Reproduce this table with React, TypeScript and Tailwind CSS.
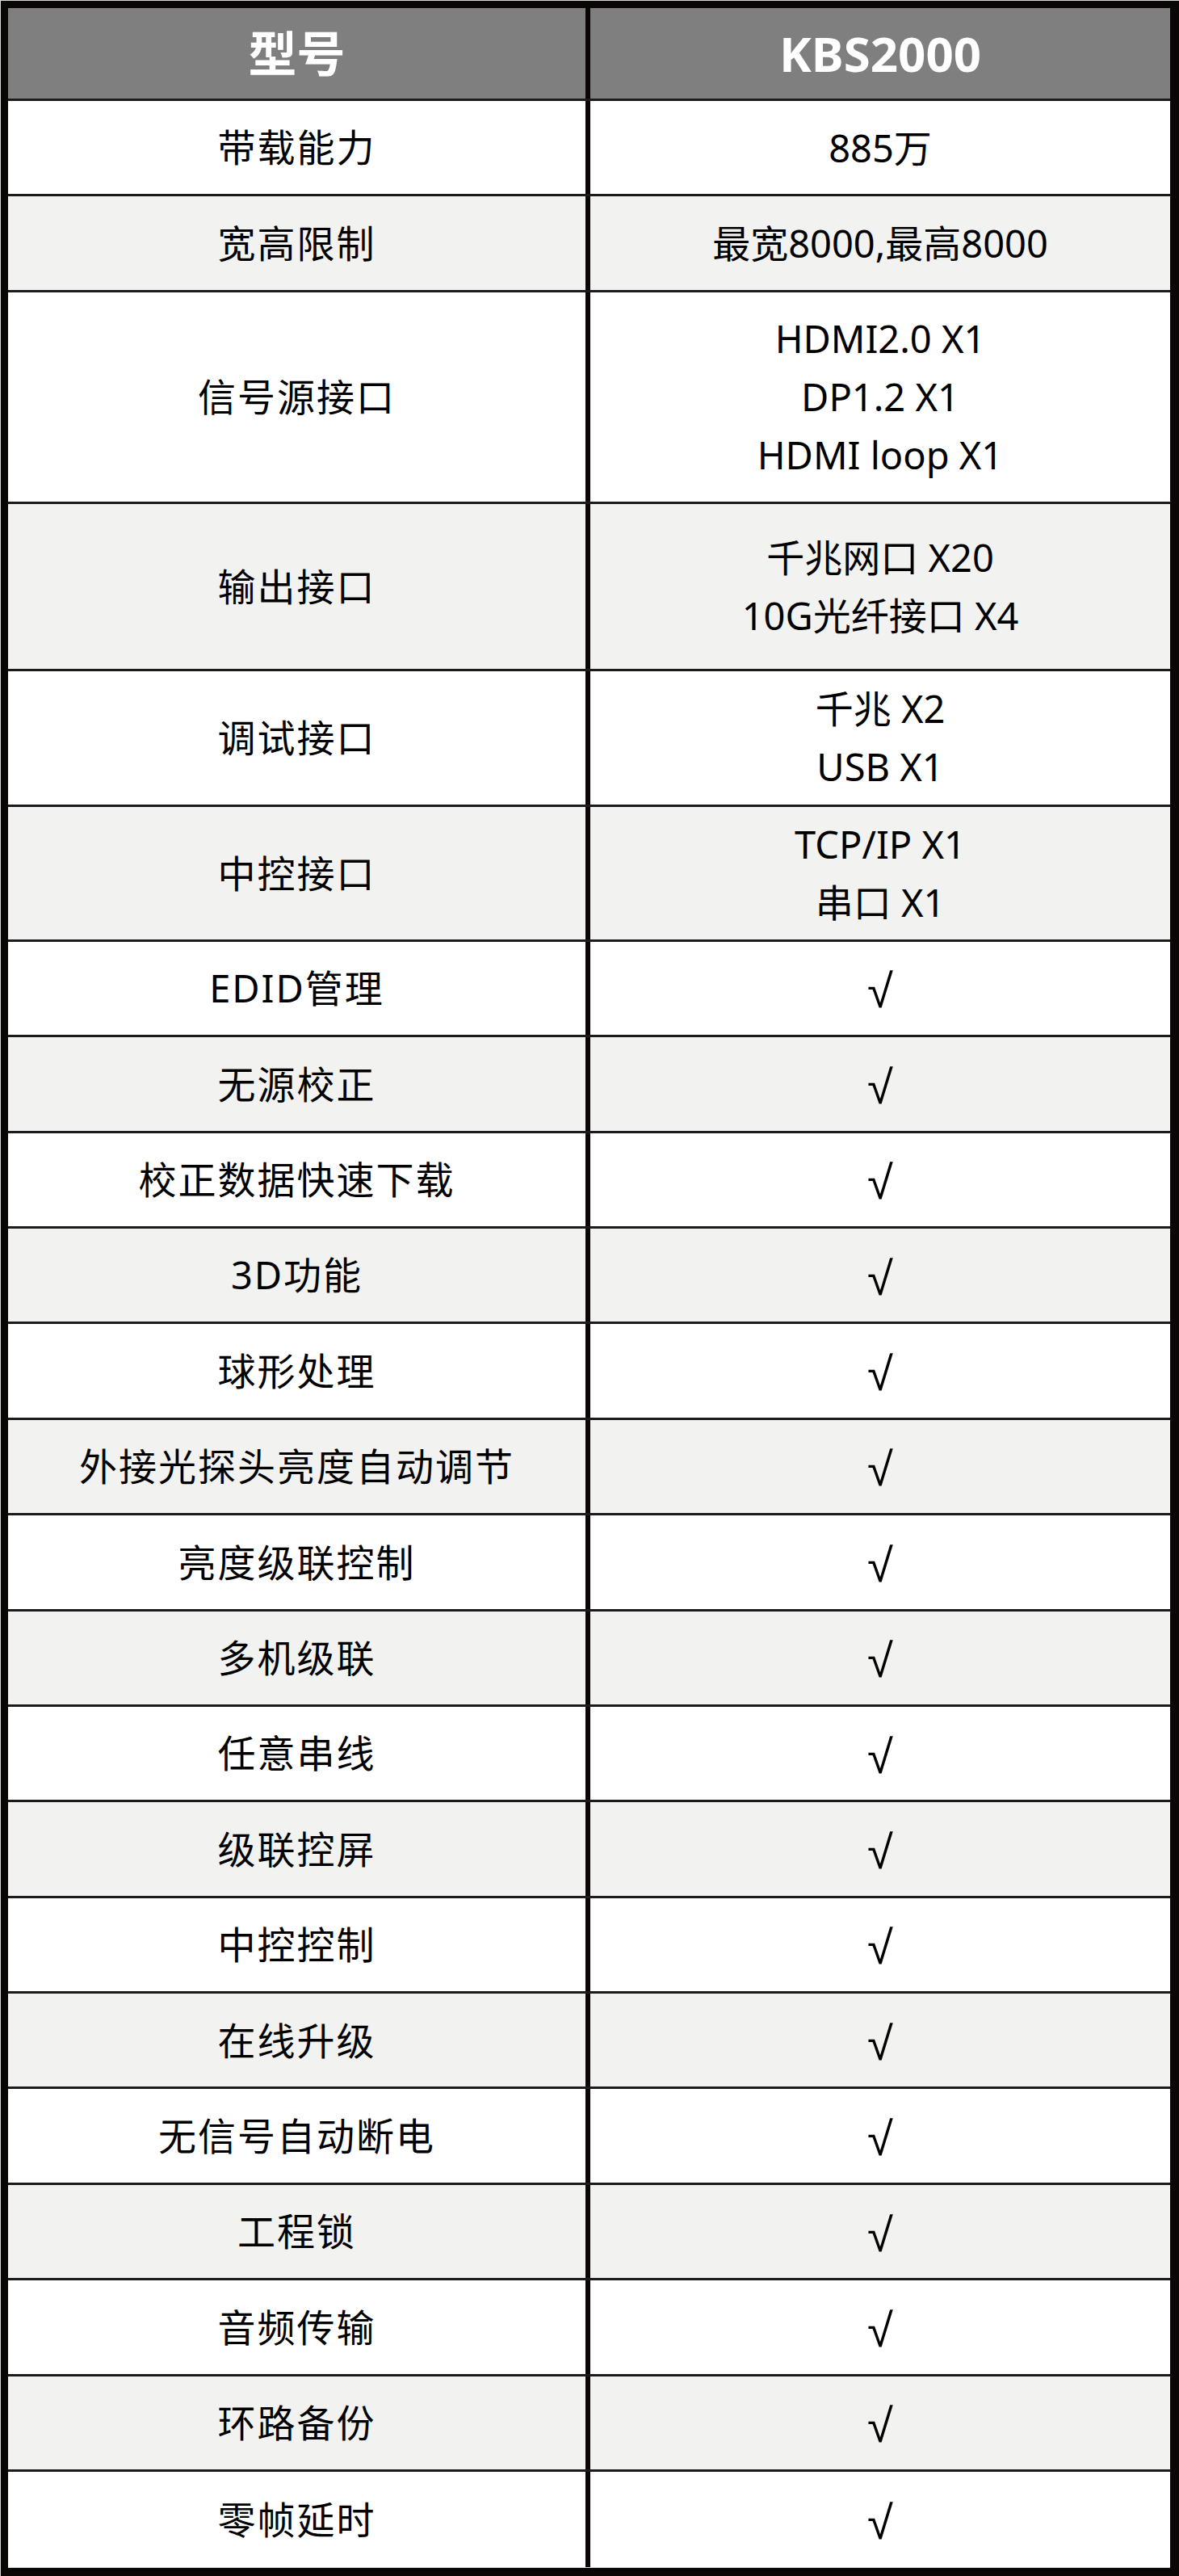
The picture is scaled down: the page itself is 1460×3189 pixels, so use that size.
const rows: { name: string; value: string[]; h?: string }[] = [
  { name: "带载能力", value: ["885万"] },
  { name: "宽高限制", value: ["最宽8000,最高8000"] },
  { name: "信号源接口", value: ["HDMI2.0 X1", "DP1.2 X1", "HDMI loop X1"], h: "h-[262px]" },
  { name: "输出接口", value: ["千兆网口 X20", "10G光纤接口 X4"], h: "h-[207px]" },
  { name: "调试接口", value: ["千兆 X2", "USB X1"], h: "h-[168px]" },
  { name: "中控接口", value: ["TCP/IP X1", "串口 X1"], h: "h-[167px]" },
  { name: "EDID管理", value: ["√"] },
  { name: "无源校正", value: ["√"] },
  { name: "校正数据快速下载", value: ["√"] },
  { name: "3D功能", value: ["√"] },
  { name: "球形处理", value: ["√"] },
  { name: "外接光探头亮度自动调节", value: ["√"] },
  { name: "亮度级联控制", value: ["√"] },
  { name: "多机级联", value: ["√"] },
  { name: "任意串线", value: ["√"] },
  { name: "级联控屏", value: ["√"] },
  { name: "中控控制", value: ["√"] },
  { name: "在线升级", value: ["√"] },
  { name: "无信号自动断电", value: ["√"] },
  { name: "工程锁", value: ["√"] },
  { name: "音频传输", value: ["√"] },
  { name: "环路备份", value: ["√"] },
  { name: "零帧延时", value: ["√"] },
];

const font = "font-['Noto_Sans','Noto_Sans_CJK_SC',sans-serif]";

export default function App() {
  return (
    <div className={`w-[1460px] h-[3189px] bg-[#d9d9d9] pl-px pt-px ${font}`}>
      <div className="flex h-full flex-col border-t-[9px] border-l-[9px] border-r-[11px] border-b-[10px] border-[#0a0606]">
        <div className="flex h-[115px] shrink-0 border-b-[3px] border-[#1c1a1a] bg-[#7f7f7f] text-[60px] font-bold text-white">
          <div className="flex w-[715px] items-center justify-center">型号</div>
          <div className="flex flex-1 items-center justify-center border-l-[6px] border-[#0a0606]">KBS2000</div>
        </div>
        {rows.map((r, i) => {
          const last = i === rows.length - 1;
          return (
            <div
              key={r.name}
              className={`flex shrink-0 text-[47px] text-black ${r.h ?? "h-[118.4px]"} ${
                last ? "" : "border-b-[3px] border-[#1c1a1a]"
              } ${i % 2 ? "bg-[#f2f2f0]" : "bg-white"}`}
            >
              <div className="flex w-[715px] items-center justify-center tracking-[2px]">{r.name}</div>
              <div className="flex flex-1 flex-col items-center justify-center border-l-[6px] border-[#0a0606] leading-[72px]">
                {r.value.map((v) =>
                  v === "√" ? (
                    <span key={v} className="mt-[8px] font-['Liberation_Sans',sans-serif] text-[58px]">
                      {v}
                    </span>
                  ) : (
                    <span key={v}>{v}</span>
                  )
                )}
              </div>
            </div>
          );
        })}
      </div>
    </div>
  );
}
